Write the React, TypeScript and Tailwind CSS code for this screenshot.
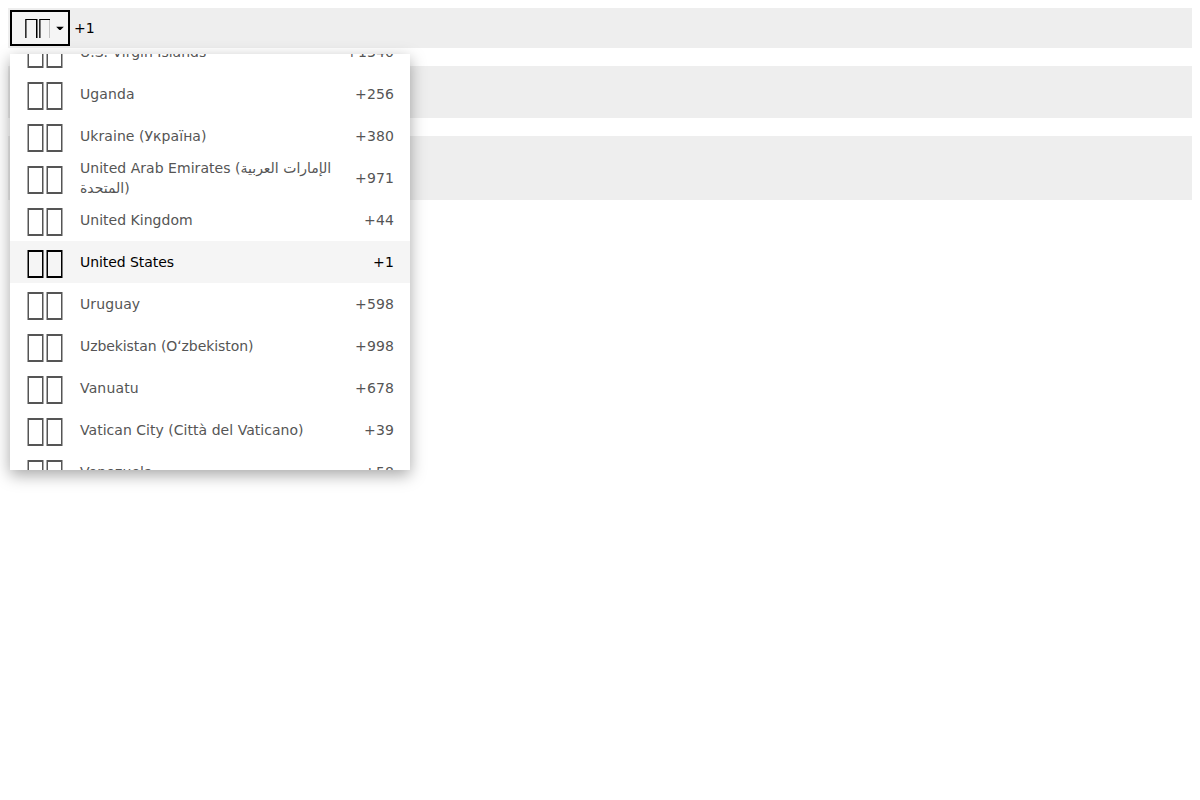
type Country = { name: string; code: string; tracking: string };

const countries: Country[] = [
  { name: "U.S. Virgin Islands", code: "+1340", tracking: "tracking-normal" },
  { name: "Uganda", code: "+256", tracking: "tracking-[0.1px]" },
  { name: "Ukraine (Україна)", code: "+380", tracking: "tracking-[0.06px]" },
  { name: "United Arab Emirates (الإمارات العربية المتحدة)", code: "+971", tracking: "tracking-[0.035px]" },
  { name: "United Kingdom", code: "+44", tracking: "tracking-[0.02px]" },
  { name: "United States", code: "+1", tracking: "tracking-[-0.06px]" },
  { name: "Uruguay", code: "+598", tracking: "tracking-[0.1px]" },
  { name: "Uzbekistan (Oʻzbekiston)", code: "+998", tracking: "tracking-[-0.08px]" },
  { name: "Vanuatu", code: "+678", tracking: "tracking-[0.15px]" },
  { name: "Vatican City (Città del Vaticano)", code: "+39", tracking: "tracking-[0.03px]" },
  { name: "Venezuela", code: "+58", tracking: "tracking-[0.1px]" },
];

const SELECTED = "United States";

/* Two-box placeholder that stands for a country flag. */
function FlagBoxes() {
  return (
    <svg className="mr-4 h-[42px] w-[38px] shrink-0" viewBox="0 0 38 42" fill="currentColor" fillRule="evenodd">
      <path d="M1.5 9h16v28h-16zM3 11v24h13V11z" />
      <path d="M20.5 9h16v28h-16zM22 11v24h13V11z" />
    </svg>
  );
}

/* Smaller flag, cut off at the bottom and at the right by the button. */
function ClippedFlagBoxes() {
  return (
    <svg className="h-5 w-7 shrink-0" viewBox="0 0 28 20" fill="currentColor">
      <path d="M3.2 1h12.3v19H14V2H4.5v18H3.2z" />
      <path d="M17.2 1H28v1h-9.5v18h-1.3zM27.8 2h.2v18h-.2z" />
    </svg>
  );
}

function CountryRow({ country }: { country: Country }) {
  const selected = country.name === SELECTED;
  return (
    <li
      className={`flex h-[42px] shrink-0 items-center px-4 leading-5 ${
        selected ? "bg-[#f5f5f5] text-black" : "bg-white text-[#555]"
      }`}
    >
      <FlagBoxes />
      <span className={`w-[260px] shrink-0 ${country.tracking}`}>{country.name}</span>
      <span className="ml-auto tracking-[0.12px]">{country.code}</span>
    </li>
  );
}

export default function App() {
  return (
    <div className="relative flex min-h-screen flex-col gap-[18px] bg-white p-2 font-['DejaVu_Sans',sans-serif] text-[14px] text-black">
      <div className="flex h-10 items-center bg-[#eee] p-0.5">
        <button className="flex h-9 w-[60px] items-center border-2 border-black bg-[#f5f5f5] pl-[10px]">
          <ClippedFlagBoxes />
          <svg className="ml-[6px] h-[6px] w-[8px] shrink-0" viewBox="0 0 8 6">
            <path d="M.2 1.7h7.6L4.6 5.1H3.4z" fill="currentColor" />
          </svg>
        </button>
        <span className="ml-1">+1</span>
      </div>
      <div className="h-[52px] bg-[#eee]" />
      <div className="h-16 bg-[#eee]" />
      <div className="absolute left-[10px] top-[54px] h-[416px] w-[400px] overflow-hidden bg-white shadow-[0_5px_15px_rgba(0,0,0,0.35)]">
        <ul className="-mt-[23px] flex flex-col">
          {countries.map((c) => (
            <CountryRow key={c.name} country={c} />
          ))}
        </ul>
      </div>
    </div>
  );
}
